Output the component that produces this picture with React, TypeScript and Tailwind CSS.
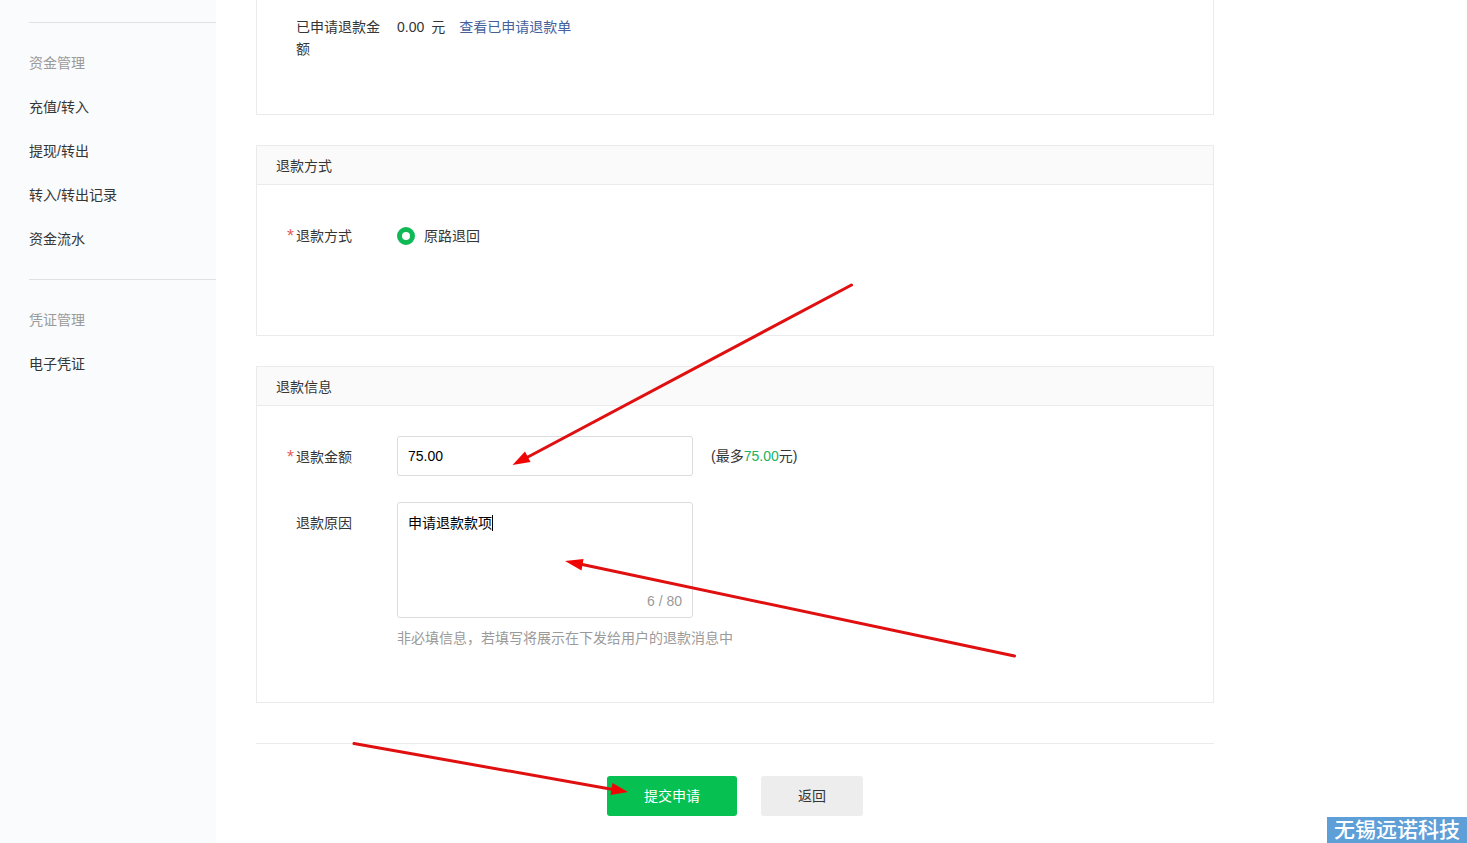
import React, { useState } from 'react';
import { clsx } from 'clsx';

interface NavGroup {
  title: string;
  items: string[];
}

const navGroups: NavGroup[] = [
  {
    title: '资金管理',
    items: ['充值/转入', '提现/转出', '转入/转出记录', '资金流水'],
  },
  {
    title: '凭证管理',
    items: ['电子凭证'],
  },
];

const MAX_REASON = 80;

function Sidebar() {
  return (
    <aside className="w-[216px] shrink-0 bg-[#fafbfc] pt-[22px] pl-[29px]">
      <nav>
        {navGroups.map((group) => (
          <div key={group.title} className="border-t border-[#dfe1e5] py-[18px]">
            <h2 className="h-11 leading-[44px] text-[#9a9a9a]">{group.title}</h2>
            <ul>
              {group.items.map((item) => (
                <li key={item}>
                  <a href="#" className="block h-11 leading-[44px]">
                    {item}
                  </a>
                </li>
              ))}
            </ul>
          </div>
        ))}
      </nav>
    </aside>
  );
}

function Panel({ title, className, children }: { title: string; className?: string; children: React.ReactNode }) {
  return (
    <section className="mt-[30px] border border-[#ebebeb]">
      <h2 className="h-[39px] border-b border-[#ebebeb] bg-[#fafafa] pl-[19px] leading-[40px]">{title}</h2>
      <div className={clsx('pt-[30px] pl-[39px]', className)}>{children}</div>
    </section>
  );
}

function FieldLabel({ htmlFor, required, children }: { htmlFor: string; required?: boolean; children: React.ReactNode }) {
  return (
    <label htmlFor={htmlFor} className="relative mr-4 w-[85px] shrink-0 pt-[10px]">
      {required && <span className="absolute right-full mr-[2px] text-[18px] text-[#e15f63]">*</span>}
      {children}
    </label>
  );
}

/* 操作指引箭头 */
function GuideArrows() {
  return (
    <svg
      className="pointer-events-none absolute top-0 left-0 z-10"
      width="1060"
      height="843"
      viewBox="0 0 1060 843"
      aria-hidden="true"
    >
      <g stroke="#e00f10" strokeWidth="3" strokeLinecap="round">
        <path d="M851.500 285L526 458" />
        <path d="M1014.500 656L580 564" />
        <path d="M354 743.500L613 789.500" />
      </g>
      <g fill="#f00505">
        <path d="M512.500 465L525 451.500L530.500 462Z" />
        <path d="M565 561L583.500 559L581.500 570.500Z" />
        <path d="M628 792L612.500 783L610.500 795Z" />
      </g>
    </svg>
  );
}

export default function App() {
  const [amount, setAmount] = useState('75.00');
  const [reason, setReason] = useState('申请退款款项');

  return (
    <div className="relative flex min-h-screen overflow-hidden bg-white font-['Liberation_Sans','Noto_Sans_CJK_SC',sans-serif] text-[14px] leading-[22px] text-[#353535]">
      <Sidebar />

      <main className="ml-10 max-w-[958px] flex-1">
        <section className="flex border-x border-b border-[#ebebeb] pt-4 pb-[54px] pl-[39px]">
          <div className="mr-4 w-[85px]">已申请退款金额</div>
          <div className="flex">
            <span>0.00</span>
            <span className="ml-[7px]">元</span>
            <a href="#" className="ml-[14px] text-[#44619c]">
              查看已申请退款单
            </a>
          </div>
        </section>

        <Panel title="退款方式" className="pb-[88px]">
          <div className="flex">
            <FieldLabel htmlFor="origin" required>
              退款方式
            </FieldLabel>
            <div className="flex items-center gap-[9px] pt-[10px]">
              <input
                id="origin"
                type="radio"
                name="method"
                defaultChecked
                className="h-[18px] w-[18px] appearance-none rounded-full border-[5px] border-[#0fb955] bg-white"
              />
              <label htmlFor="origin">原路退回</label>
            </div>
          </div>
        </Panel>

        <Panel title="退款信息" className="pb-[53px]">
          <div className="flex">
            <FieldLabel htmlFor="amount" required>
              退款金额
            </FieldLabel>
            <div className="flex items-center">
              <input
                id="amount"
                type="text"
                value={amount}
                onChange={(e) => setAmount(e.target.value)}
                className="h-10 w-[296px] rounded-[3px] border border-[#dcdcdc] px-[10px] text-black outline-none"
              />
              <span className="ml-[18px]">
                (最多<span className="text-[#20b25b]">75.00</span>元)
              </span>
            </div>
          </div>

          <div className="mt-[26px] flex">
            <FieldLabel htmlFor="reason">退款原因</FieldLabel>
            <div>
              <div className="relative w-[296px]">
                <textarea
                  id="reason"
                  value={reason}
                  maxLength={MAX_REASON}
                  onChange={(e) => setReason(e.target.value)}
                  className="block h-[116px] w-full resize-none rounded-[3px] border border-[#dcdcdc] px-[10px] py-[9px] text-black outline-none"
                />
                <span className="absolute top-[13px] left-[95px] h-4 w-px bg-black" />
                <span className="absolute right-[11px] bottom-[6px] text-[#9a9a9a]">
                  {reason.length} / {MAX_REASON}
                </span>
              </div>
              <p className="mt-[9px] text-[#9a9a9a]">非必填信息，若填写将展示在下发给用户的退款消息中</p>
            </div>
          </div>
        </Panel>

        <div className="mt-10 flex justify-center gap-6 border-t border-[#ebebeb] pt-8">
          <button type="submit" className="h-10 w-[130px] rounded-[3px] bg-[#06c152] text-white">
            提交申请
          </button>
          <button type="button" className="h-10 w-[102px] rounded-[3px] bg-[#ededed]">
            返回
          </button>
        </div>
      </main>

      <GuideArrows />

      <div className="absolute right-0 bottom-0 bg-[#5f9fd8] px-[7px] text-[21px] leading-[26px] font-medium text-white">
        无锡远诺科技
      </div>
    </div>
  );
}
